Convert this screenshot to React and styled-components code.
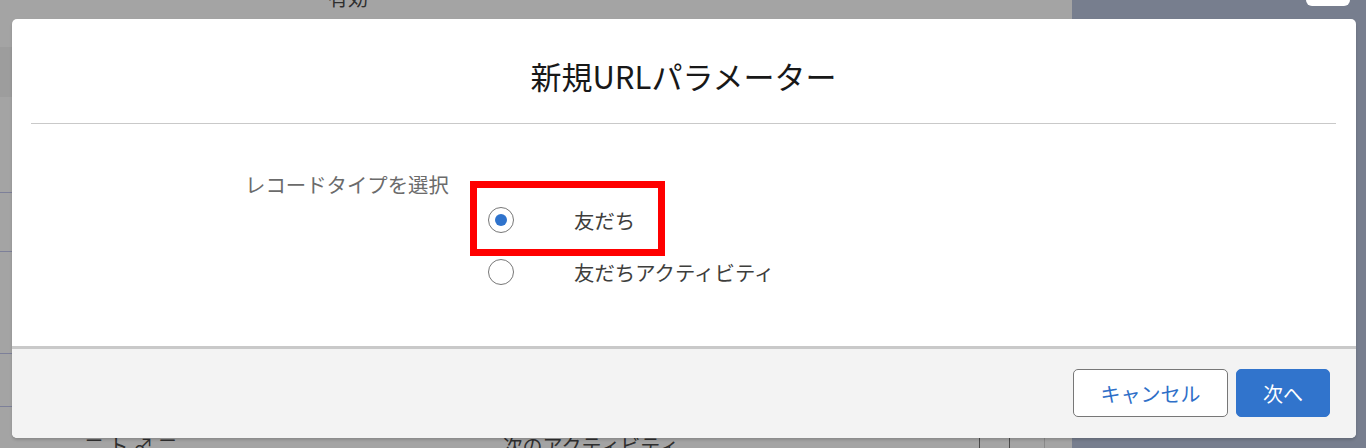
import React, { useState } from 'react'
import styled, { createGlobalStyle } from 'styled-components'

const GlobalStyle = createGlobalStyle`
  * { box-sizing: border-box; }
  html, body { margin: 0; padding: 0; }
  body {
    width: 1366px;
    height: 448px;
    overflow: hidden;
    font-family: "Noto Sans CJK JP", "Noto Sans", sans-serif;
  }
`

const recordTypes = [
    { id: 'friend', label: '友だち' },
    { id: 'activity', label: '友だちアクティビティ' },
]

// page behind the dimmed overlay
const Screen = styled.div`
position: relative;
width: 1366px;
height: 448px;
display: flex;
overflow: hidden;
background: #a4a4a4;
`

const BgMain = styled.div`
flex: 1;
display: flex;
flex-direction: column;
`

const BgRow = styled.div`
height: ${p => p.h}px;
flex-shrink: 0;
display: flex;
align-items: ${p => p.align || 'center'};
background: ${p => p.dark ? '#9d9d9d' : 'transparent'};
border-bottom: ${p => p.line ? '1px solid #7d8099' : 'none'};
font-size: 20px;
color: #2f2f2f;
`

const BgText = styled.span`
margin-left: ${p => p.left}px;
margin-top: ${p => p.top || 0}px;
white-space: nowrap;
line-height: 20px;
`

const BgBox = styled.span`
margin-left: ${p => p.left}px;
margin-top: 26px;
width: 31px;
height: 26px;
border: 1px solid #4a4a4a;
border-radius: 5px;
`

const BgDivider = styled.span`
margin-left: 34px;
width: 1px;
align-self: stretch;
background: #8a8a8a;
`

const BgSidebar = styled.div`
width: 294px;
background: #777e8e;
display: flex;
justify-content: flex-end;
`

const BgTab = styled.div`
width: 44px;
height: 6px;
margin-right: 16px;
background: #ffffff;
border-radius: 0 0 6px 6px;
`

// dialog
const Modal = styled.div`
position: absolute;
top: 19px;
left: 12px;
width: 1344px;
height: 419px;
display: flex;
flex-direction: column;
background: #ffffff;
border-radius: 5px;
box-shadow: 0 2px 3px rgba(0, 0, 0, 0.16);
overflow: hidden;
`

const Header = styled.header`
margin: 0 20px 0 19px;
padding: 38px 0 28px;
border-bottom: 1px solid #c9c9c9;
text-align: center;
h2{
    margin: 0;
    font-size: 31px;
    line-height: 38px;
    font-weight: 400;
    color: #181818;
}
`

const Body = styled.div`
flex: 1;
display: flex;
align-items: flex-start;
padding: 50px 0 0 233px;
`

const Label = styled.span`
width: 225px;
font-size: 20.4px;
line-height: 20px;
color: #6b6b6b;
`

const Options = styled.div`
margin-top: 7px;
display: flex;
flex-direction: column;
gap: 3px;
`

const Highlight = styled.div`
width: 195px;
height: 75px;
border: 7px solid #ff0000;
padding: 19px 0 0 11px;
`

const Option = styled.label`
display: flex;
align-items: center;
gap: 60px;
padding-left: ${p => p.inset || 0}px;
font-size: 20.4px;
line-height: 26px;
color: #3e3e3c;
cursor: pointer;
white-space: nowrap;
`

const Radio = styled.span`
width: 26px;
height: 26px;
flex-shrink: 0;
border-radius: 50%;
border: 1px solid #777777;
background: #ffffff;
display: flex;
align-items: center;
justify-content: center;
&::after{
    content: '';
    width: 12px;
    height: 12px;
    border-radius: 50%;
    background: ${p => p.checked ? '#2f73cc' : 'transparent'};
}
`

const Footer = styled.footer`
height: 92px;
border-top: 3px solid #c9c9c9;
background: #f3f3f3;
display: flex;
justify-content: flex-end;
align-items: flex-start;
gap: 8px;
padding: 20px 26px 0 0;
`

const Button = styled.button`
height: 48px;
width: ${p => p.w}px;
font-family: inherit;
font-size: 20px;
border-radius: 5px;
border: 1px solid ${p => p.primary ? '#3174cc' : '#777777'};
background: ${p => p.primary ? '#3174cc' : '#ffffff'};
color: ${p => p.primary ? '#ffffff' : '#2e6fc8'};
cursor: pointer;
`

function App() {
    const [selected, setSelected] = useState('friend')

    const renderOption = (item, inset) => (
        <Option key={item.id} inset={inset} onClick={() => setSelected(item.id)}>
            <Radio checked={selected === item.id} />
            {item.label}
        </Option>
    )

  return (
    <>
        <GlobalStyle />
        <Screen>
            <BgMain>
                <BgRow h={20} align="flex-start">
                    <BgText left={328} top={-12}>有効</BgText>
                </BgRow>
                <BgRow h={27} />
                <BgRow h={50} dark />
                <BgRow h={96} line />
                <BgRow h={59} line />
                <BgRow h={102} line />
                <BgRow h={53} line />
                <BgRow h={41} align="flex-start">
                    <BgText left={84} top={29}>二 ト ♂ 二</BgText>
                    <BgText left={325} top={29}>次のアクティビティ</BgText>
                    <BgBox left={300} />
                    <BgDivider />
                </BgRow>
            </BgMain>
            <BgSidebar>
                <BgTab />
            </BgSidebar>

            <Modal>
                <Header>
                    <h2>新規URLパラメーター</h2>
                </Header>
                <Body>
                    <Label>レコードタイプを選択</Label>
                    <Options>
                        <Highlight>
                            {renderOption(recordTypes[0])}
                        </Highlight>
                        {renderOption(recordTypes[1], 18)}
                    </Options>
                </Body>
                <Footer>
                    <Button w={155}>キャンセル</Button>
                    <Button w={94} primary>次へ</Button>
                </Footer>
            </Modal>
        </Screen>
    </>
  )
}

export default App
